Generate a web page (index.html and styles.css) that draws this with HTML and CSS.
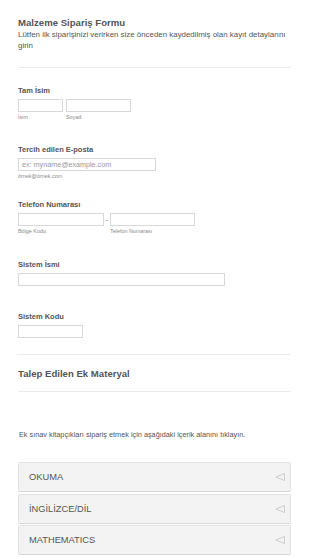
FILE: index.html
```html
<!DOCTYPE html>
<html lang="tr">
<head>
<meta charset="utf-8">
<title>Malzeme Sipariş Formu</title>
<link rel="stylesheet" href="styles.css">
</head>
<body>
<div class="form">
  <div class="form-header">
    <h1 class="title">Malzeme Sipariş Formu</h1>
    <p class="subtitle">Lütfen ilk siparişinizi verirken size önceden kaydedilmiş olan kayıt detaylarını girin</p>
  </div>

  <div class="field field-name">
    <div class="label">Tam İsim</div>
    <div class="row">
      <div class="sub">
        <input class="input in-first" type="text">
        <span class="sublabel">İsim</span>
      </div>
      <div class="sub">
        <input class="input in-last" type="text">
        <span class="sublabel">Soyad</span>
      </div>
    </div>
  </div>

  <div class="field field-email">
    <div class="label">Tercih edilen E-posta</div>
    <input class="input in-email" type="text" placeholder="ex: myname@example.com">
    <span class="sublabel">örnek@örnek.com</span>
  </div>

  <div class="field field-phone">
    <div class="label">Telefon Numarası</div>
    <div class="row">
      <div class="sub">
        <input class="input in-area" type="text">
        <span class="sublabel">Bölge Kodu</span>
      </div>
      <span class="dash">-</span>
      <div class="sub">
        <input class="input in-phone" type="text">
        <span class="sublabel">Telefon Numarası</span>
      </div>
    </div>
  </div>

  <div class="field field-sysname">
    <div class="label">Sistem İsmi</div>
    <input class="input in-sysname" type="text">
  </div>

  <div class="field field-syscode">
    <div class="label">Sistem Kodu</div>
    <input class="input in-syscode" type="text">
  </div>

  <div class="section-header">
    <h2 class="section-title">Talep Edilen Ek Materyal</h2>
  </div>

  <p class="note">Ek sınav kitapçıkları sipariş etmek için aşağıdaki içerik alanını tıklayın.</p>

  <div class="accordion">
    <div class="acc-item"><span>OKUMA</span><svg class="acc-arrow" viewBox="0 0 10 8" width="10" height="8"><polygon points="9.5,0.5 9.5,7.5 0.8,4" fill="none" stroke="#c9c9c9" stroke-width="0.9" stroke-linejoin="round"/></svg></div>
    <div class="acc-item"><span>İNGİLİZCE/DİL</span><svg class="acc-arrow" viewBox="0 0 10 8" width="10" height="8"><polygon points="9.5,0.5 9.5,7.5 0.8,4" fill="none" stroke="#c9c9c9" stroke-width="0.9" stroke-linejoin="round"/></svg></div>
    <div class="acc-item"><span>MATHEMATICS</span><svg class="acc-arrow" viewBox="0 0 10 8" width="10" height="8"><polygon points="9.5,0.5 9.5,7.5 0.8,4" fill="none" stroke="#c9c9c9" stroke-width="0.9" stroke-linejoin="round"/></svg></div>
  </div>
</div>
</body>
</html>
```

FILE: styles.css
```css
* { box-sizing: border-box; }
html, body { margin: 0; padding: 0; background: #fff; }
body {
  font-family: "Liberation Sans", Arial, sans-serif;
  color: #555;
  width: 310px;
  overflow: hidden;
}
.form { padding: 17px 19px 0 18px; }

.form-header {
  padding-bottom: 16px;
  border-bottom: 1px solid #ebebeb;
}
.title {
  margin: 0;
  font-size: 9.6px;
  line-height: 12px;
  font-weight: bold;
  color: #555;
}
.subtitle {
  margin: 1px 0 0;
  font-size: 7.9px;
  line-height: 10.5px;
  color: #555;
}

.field { margin-top: 18px; }
.field-email { margin-top: 24px; }
.field-phone { margin-top: 20px; }
.field-sysname { margin-top: 25px; }
.field-syscode { margin-top: 26px; }

.label {
  font-size: 7.5px;
  line-height: 9px;
  font-weight: bold;
  color: #555;
  margin-bottom: 4px;
}
.row { display: flex; align-items: flex-start; }
.sub { display: flex; flex-direction: column; }
.field-name .sub + .sub { margin-left: 3px; }
.input {
  display: block;
  height: 13px;
  margin: 0;
  padding: 0 3px;
  border: 1px solid #d8d8d8;
  border-radius: 0;
  background: #fff;
  font-family: "Liberation Sans", Arial, sans-serif;
  font-size: 7.2px;
  color: #555;
  outline: none;
}
.input::placeholder { color: #999; }
.in-first { width: 45px; }
.in-last { width: 65px; }
.in-email { width: 138px; }
.in-area { width: 86px; }
.in-phone { width: 85px; }
.in-sysname { width: 207px; }
.in-syscode { width: 65px; }
.dash {
  width: 6px;
  text-align: center;
  font-size: 7px;
  line-height: 13px;
  color: #777;
}
.sublabel {
  display: block;
  font-size: 5.4px;
  line-height: 8px;
  color: #8a8a8a;
  margin-top: 1px;
}

.section-header {
  margin-top: 16px;
  border-top: 1px solid #ebebeb;
  border-bottom: 1px solid #ebebeb;
  padding: 13px 0 11px;
}
.section-title {
  margin: 0;
  font-size: 9.6px;
  line-height: 12px;
  font-weight: bold;
  color: #555;
}

.note {
  margin: 38px 0 0 1px;
  font-size: 7.3px;
  line-height: 10px;
  color: #555;
}

.accordion {
  margin-top: 22px;
  display: flex;
  flex-direction: column;
  gap: 1.5px;
}
.acc-item {
  height: 30px;
  display: flex;
  align-items: center;
  justify-content: space-between;
  padding: 0 5px 0 10px;
  background: #f3f3f3;
  border: 1px solid #e2e2e2;
  border-bottom-color: #d6d6d6;
  border-radius: 2px;
  font-size: 9.3px;
  color: #555;
}
.acc-arrow { display: block; }
```
